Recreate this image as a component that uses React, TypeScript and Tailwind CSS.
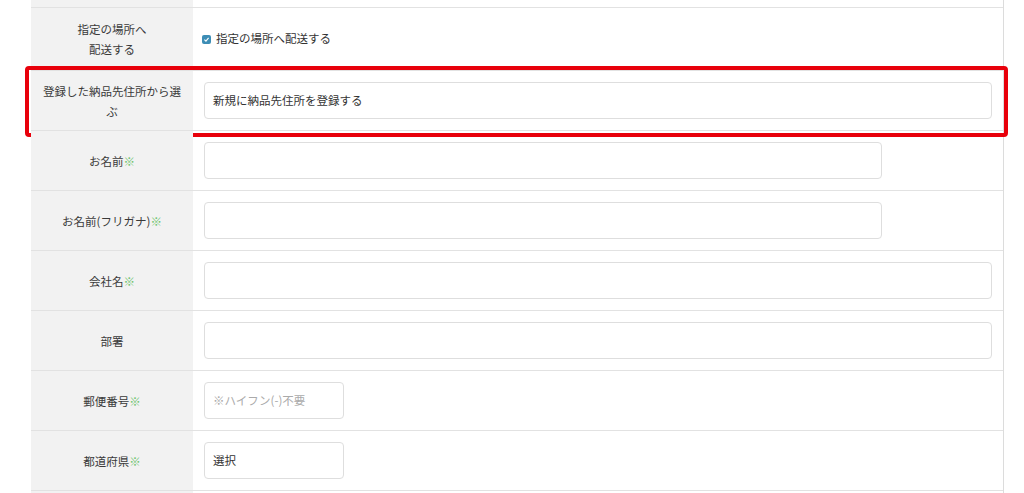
import type {ReactNode} from "react"

const FONT = {fontFamily: '"Noto Sans CJK JP", "Noto Sans", sans-serif'}

type Width = "full" | "mid" | "small"

const widthClass: Record<Width, string> = {
    full: "w-full",
    mid: "w-[678px]",
    small: "w-[140px]",
}

function Req() {
    return <span className="text-[#6fc46f]">※</span>
}

function Row({label, children, tall, highlight}: {label?: ReactNode; children: ReactNode; tall?: boolean; highlight?: boolean}) {
    return (
        <div className={`relative grid grid-cols-[162px_1fr] border-b border-[#e2e2e2] ${tall ? "h-[63px]" : "h-[60px]"}`}>
            <div className="flex items-center justify-center bg-[#f2f2f2] px-2 text-center text-[11.5px] leading-[20px] text-[#3a3a3a]">
                <div>{label}</div>
            </div>
            <div className="flex items-center px-[11px]">{children}</div>
            {highlight && (
                <div className="pointer-events-none absolute -top-[5px] -bottom-[7px] -left-[6px] -right-[5px] rounded-[4px] border-[4px] border-[#e8000b]" />
            )}
        </div>
    )
}

function Field({w = "full", value, placeholder}: {w?: Width; value?: string; placeholder?: string}) {
    return (
        <div className={`${widthClass[w]} flex h-[37px] items-center rounded-[4px] border border-[#dedede] bg-white px-[8px] text-[11.5px]`}>
            {value ? <span className="text-[#333]">{value}</span> : <span className="text-[#aaa]">{placeholder}</span>}
        </div>
    )
}

export default function App() {
    return (
        <div className="h-[493px] w-[1024px] overflow-hidden bg-white" style={FONT}>
            <div className="ml-[31px] w-[973px] border-r border-[#dcdcdc]">
                <div className="grid h-[8px] grid-cols-[162px_1fr] border-b border-[#e2e2e2]">
                    <div className="bg-[#f2f2f2]" />
                    <div />
                </div>

                <Row tall label={<>指定の場所へ<br />配送する</>}>
                    <label className="flex items-center gap-[5px] text-[11.5px] text-[#333]">
                        <span className="-ml-[2px] flex h-[9px] w-[9px] items-center justify-center rounded-[2px] bg-[#3d8db5]">
                            <svg viewBox="0 0 10 10" className="h-[7px] w-[7px]">
                                <path d="M2 5.2 L4.2 7.3 L8 2.8" fill="none" stroke="white" strokeWidth="1.6" />
                            </svg>
                        </span>
                        指定の場所へ配送する
                    </label>
                </Row>

                <Row highlight label="登録した納品先住所から選ぶ">
                    <Field value="新規に納品先住所を登録する" />
                </Row>

                <Row label={<>お名前<Req /></>}>
                    <Field w="mid" />
                </Row>

                <Row label={<>お名前(フリガナ)<Req /></>}>
                    <Field w="mid" />
                </Row>

                <Row label={<>会社名<Req /></>}>
                    <Field />
                </Row>

                <Row label="部署">
                    <Field />
                </Row>

                <Row label={<>郵便番号<Req /></>}>
                    <Field w="small" placeholder="※ハイフン(-)不要" />
                </Row>

                <Row label={<>都道府県<Req /></>}>
                    <Field w="small" value="選択" />
                </Row>

                <Row>
                    <Field />
                </Row>
            </div>
        </div>
    )
}
